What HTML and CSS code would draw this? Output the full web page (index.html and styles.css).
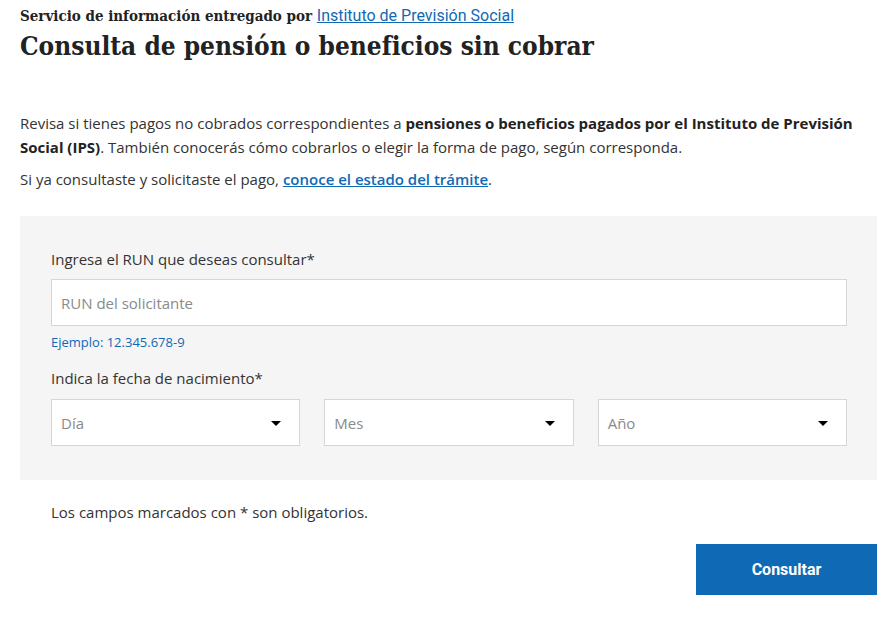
FILE: index.html
```html
<!DOCTYPE html>
<html lang="es">
<head>
  <meta charset="UTF-8" />
  <meta name="viewport" content="width=device-width, initial-scale=1.0"/>
  <title>Consulta de pensión o beneficios sin cobrar</title>
  <link rel="stylesheet" href="styles.css">
</head>
<body>

  <div class="page">
    <!-- Encabezado -->
    <div class="header">
      <p class="provider">Servicio de información entregado por <a href="#">Instituto de Previsión Social</a></p>
      <h1>Consulta de pensión o beneficios sin cobrar</h1>
    </div>

    <!-- Descripción -->
    <div class="intro">
      <p>Revisa si tienes pagos no cobrados correspondientes a <strong>pensiones o beneficios pagados por el Instituto de Previsión Social (IPS)</strong>. También conocerás cómo cobrarlos o elegir la forma de pago, según corresponda.</p>
      <p class="status">Si ya consultaste y solicitaste el pago, <a href="#">conoce el estado del trámite</a>.</p>
    </div>

    <!-- Formulario -->
    <form class="panel" onsubmit="return false">
      <label for="run">Ingresa el RUN que deseas consultar*</label>
      <input type="text" id="run" placeholder="RUN del solicitante" />
      <div class="hint">Ejemplo: 12.345.678-9</div>

      <label class="date-label">Indica la fecha de nacimiento*</label>
      <div class="date-row">
        <div class="select">
          <span>Día</span>
          <i class="caret"></i>
        </div>
        <div class="select">
          <span>Mes</span>
          <i class="caret"></i>
        </div>
        <div class="select">
          <span>Año</span>
          <i class="caret"></i>
        </div>
      </div>
    </form>

    <p class="required">Los campos marcados con * son obligatorios.</p>

    <div class="actions">
      <button type="button">Consultar</button>
    </div>
  </div>

</body>
</html>
```

FILE: styles.css
```css
* {
  box-sizing: border-box;
  padding: 0;
  margin: 0;
}

body {
  background: #fff;
  color: #333;
  font-family: 'Open Sans', sans-serif;
  font-size: 15px;
}

.page {
  width: 857px;
  margin-left: 20px;
}

.header {
  padding-top: 6px;
}

.provider {
  font-family: 'DejaVu Serif', serif;
  font-stretch: condensed;
  font-weight: bold;
  font-size: 15px;
  line-height: 20px;
  color: #222;
}

.provider a {
  font-family: Roboto, sans-serif;
  font-stretch: normal;
  font-weight: normal;
  font-size: 16px;
  color: #0f69b4;
}

h1 {
  font-family: 'DejaVu Serif', serif;
  font-stretch: condensed;
  font-weight: bold;
  font-size: 26px;
  line-height: 40px;
  color: #222;
}

.intro {
  padding-top: 45px;
}

.intro p {
  line-height: 24px;
}

.intro strong {
  color: #222;
}

.intro .status {
  margin-top: 8px;
}

.intro a {
  color: #0f69b4;
  font-weight: 600;
}

.panel {
  margin-top: 25px;
  background: #f5f5f5;
  padding: 30px 30px 34px 31px;
  display: flex;
  flex-direction: column;
}

label {
  display: block;
  line-height: 26px;
  color: #333;
}

input {
  margin-top: 7px;
  height: 47px;
  border: 1px solid #d6d6d6;
  background: #fff;
  padding: 0 9px;
  font-family: 'Open Sans', sans-serif;
  font-size: 15px;
  color: #333;
}

input::placeholder {
  color: #8a8a8a;
}

.hint {
  margin-top: 7px;
  font-size: 13px;
  line-height: 18px;
  color: #0f69b4;
}

.date-label {
  margin-top: 14px;
}

.date-row {
  margin-top: 8px;
  display: grid;
  grid-template-columns: 1fr 1fr 1fr;
  gap: 24px;
}

.select {
  height: 47px;
  background: #fff;
  border: 1px solid #d6d6d6;
  display: flex;
  align-items: center;
  justify-content: space-between;
  padding: 0 18px 0 9px;
  color: #8a8a8a;
}

.caret {
  width: 0;
  height: 0;
  border-left: 5px solid transparent;
  border-right: 5px solid transparent;
  border-top: 5px solid #000;
  margin-top: 2px;
}

.required {
  margin-top: 20px;
  padding-left: 31px;
  line-height: 24px;
}

.actions {
  display: flex;
  justify-content: flex-end;
  margin-top: 20px;
}

button {
  width: 181px;
  height: 51px;
  border: none;
  background: #0f69b4;
  color: #fff;
  font-family: Roboto, sans-serif;
  font-weight: bold;
  font-size: 16px;
  cursor: pointer;
}
```
